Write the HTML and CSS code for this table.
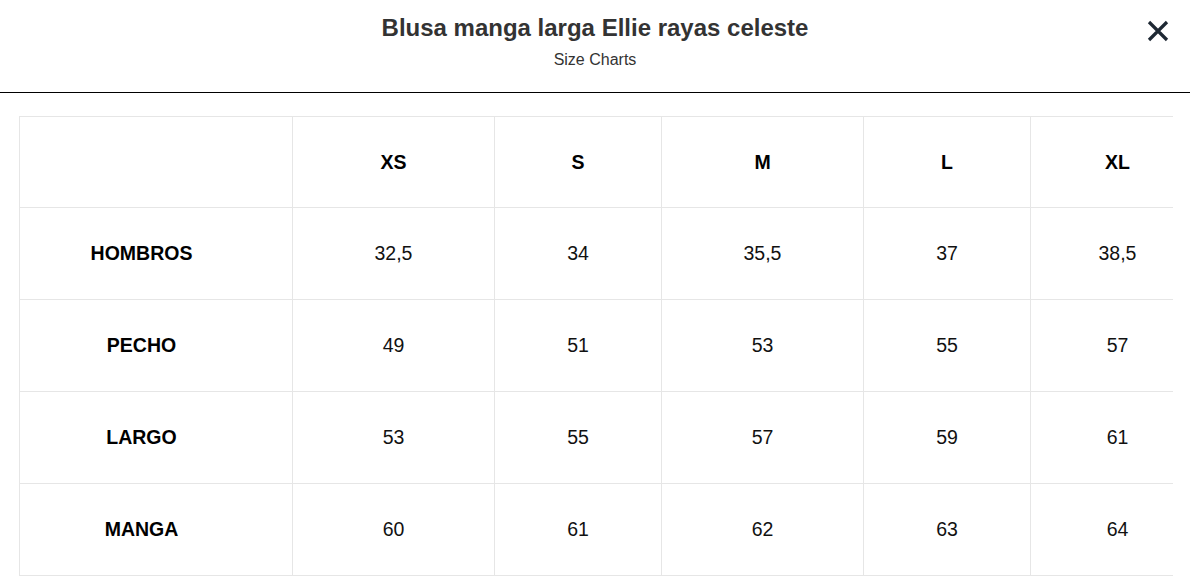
FILE: index.html
```html
<!DOCTYPE html>
<html lang="es">
<head>
<meta charset="utf-8">
<title>Size Charts</title>
<link rel="stylesheet" href="styles.css">
</head>
<body>
<header class="modal-header">
  <div class="titles">
    <h1 class="title">Blusa manga larga Ellie rayas celeste</h1>
    <p class="subtitle">Size Charts</p>
  </div>
  <button class="close" aria-label="Cerrar">
    <svg width="24" height="24" viewBox="0 0 24 24" fill="none" stroke="currentColor" stroke-width="3.2" stroke-linecap="butt"><path d="M3 3 L21 21 M21 3 L3 21"/></svg>
  </button>
</header>
<div class="table-wrap">
  <table class="chart">
    <colgroup>
      <col class="c-label"><col class="c-a"><col class="c-b"><col class="c-a"><col class="c-b"><col class="c-c">
    </colgroup>
    <tr class="head-row"><th></th><th>XS</th><th>S</th><th>M</th><th>L</th><th>XL</th></tr>
    <tr><th class="label">HOMBROS</th><td>32,5</td><td>34</td><td>35,5</td><td>37</td><td>38,5</td></tr>
    <tr><th class="label">PECHO</th><td>49</td><td>51</td><td>53</td><td>55</td><td>57</td></tr>
    <tr><th class="label">LARGO</th><td>53</td><td>55</td><td>57</td><td>59</td><td>61</td></tr>
    <tr><th class="label">MANGA</th><td>60</td><td>61</td><td>62</td><td>63</td><td>64</td></tr>
  </table>
</div>
</body>
</html>
```
FILE: styles.css
```css
* { box-sizing: border-box; }
html, body { margin: 0; padding: 0; background: #fff; }
body { font-family: "Liberation Sans", Arial, sans-serif; color: #000; }

.modal-header {
  position: relative;
  height: 93px;
  border-bottom: 1px solid #000;
  display: flex;
  justify-content: center;
}
.titles { text-align: center; padding-top: 13px; }
.title {
  margin: 0;
  font-family: "Liberation Sans", Arial, sans-serif;
  font-weight: 700;
  font-size: 24px;
  line-height: 30px;
  color: #333;
  letter-spacing: 0;
}
.subtitle {
  margin: 7px 0 0;
  font-size: 16px;
  line-height: 20px;
  color: #333;
}
.close {
  position: absolute;
  top: 19px;
  right: 20px;
  padding: 0;
  border: 0;
  background: none;
  color: #1e2833;
  width: 24px;
  height: 24px;
  cursor: pointer;
}
.close svg { display: block; }

.table-wrap {
  margin: 23px 0 0 19px;
  width: 1154px;
  overflow: hidden;
}
.chart {
  border-collapse: collapse;
  table-layout: fixed;
  width: 1185px;
}
.c-label { width: 273px; }
.c-a { width: 202px; }
.c-b { width: 167px; }
.c-c { width: 174px; }
.chart th, .chart td {
  border: 1px solid #e6e6e6;
  height: 92px;
  text-align: center;
  vertical-align: middle;
  font-size: 19.5px;
  padding: 0;
}
.chart .head-row th { height: 91px; }
.chart th { font-weight: 700; }
.chart td { font-weight: 400; color: #111; }
.chart th.label { padding-right: 29px; }
```
